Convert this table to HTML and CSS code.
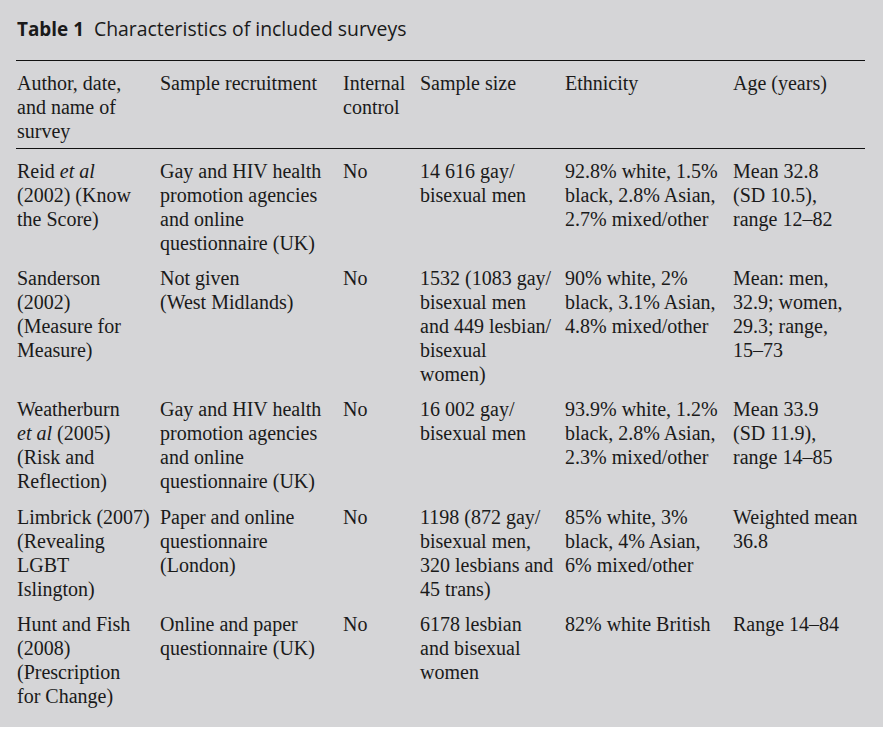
FILE: index.html
```html
<!DOCTYPE html>
<html lang="en">
<head>
<meta charset="utf-8">
<title>Table 1 Characteristics of included surveys</title>
<link rel="stylesheet" href="styles.css">
</head>
<body>
<div class="panel">
  <h1 class="caption"><span class="label">Table 1</span><span class="caption-text">Characteristics of included surveys</span></h1>
  <table class="tbl">
    <colgroup>
      <col class="c1"><col class="c2"><col class="c3"><col class="c4"><col class="c5"><col class="c6">
    </colgroup>
    <thead>
      <tr>
        <th>Author, date,<br>and name of<br>survey</th>
        <th>Sample recruitment</th>
        <th>Internal<br>control</th>
        <th>Sample size</th>
        <th>Ethnicity</th>
        <th>Age (years)</th>
      </tr>
    </thead>
    <tbody>
      <tr>
        <td>Reid <i>et al</i><br>(2002) (Know<br>the Score)</td>
        <td>Gay and HIV health<br>promotion agencies<br>and online<br>questionnaire (UK)</td>
        <td>No</td>
        <td>14 616 gay/<br>bisexual men</td>
        <td>92.8% white, 1.5%<br>black, 2.8% Asian,<br>2.7% mixed/other</td>
        <td>Mean 32.8<br>(SD 10.5),<br>range 12–82</td>
      </tr>
      <tr>
        <td>Sanderson<br>(2002)<br>(Measure for<br>Measure)</td>
        <td>Not given<br>(West Midlands)</td>
        <td>No</td>
        <td>1532 (1083 gay/<br>bisexual men<br>and 449 lesbian/<br>bisexual<br>women)</td>
        <td>90% white, 2%<br>black, 3.1% Asian,<br>4.8% mixed/other</td>
        <td>Mean: men,<br>32.9; women,<br>29.3; range,<br>15–73</td>
      </tr>
      <tr>
        <td>Weatherburn<br><i>et al</i> (2005)<br>(Risk and<br>Reflection)</td>
        <td>Gay and HIV health<br>promotion agencies<br>and online<br>questionnaire (UK)</td>
        <td>No</td>
        <td>16 002 gay/<br>bisexual men</td>
        <td>93.9% white, 1.2%<br>black, 2.8% Asian,<br>2.3% mixed/other</td>
        <td>Mean 33.9<br>(SD 11.9),<br>range 14–85</td>
      </tr>
      <tr class="row-wide">
        <td>Limbrick (2007)<br>(Revealing<br>LGBT<br>Islington)</td>
        <td>Paper and online<br>questionnaire<br>(London)</td>
        <td>No</td>
        <td>1198 (872 gay/<br>bisexual men,<br>320 lesbians and<br>45 trans)</td>
        <td>85% white, 3%<br>black, 4% Asian,<br>6% mixed/other</td>
        <td>Weighted mean<br>36.8</td>
      </tr>
      <tr>
        <td>Hunt and Fish<br>(2008)<br>(Prescription<br>for Change)</td>
        <td>Online and paper<br>questionnaire (UK)</td>
        <td>No</td>
        <td>6178 lesbian<br>and bisexual<br>women</td>
        <td>82% white British</td>
        <td>Range 14–84</td>
      </tr>
    </tbody>
  </table>
</div>
</body>
</html>
```
FILE: styles.css
```css
html {
  background: #ffffff;
}
body {
  margin: 0;
}
.panel {
  background: #d5d5d7;
  height: 727px;
  box-sizing: border-box;
  padding: 17px 18px 0 16px;
  color: #1a1a1a;
}
.caption {
  margin: 0 0 0 1px;
  font-family: "Open Sans", "Noto Sans", sans-serif;
  font-size: 19.4px;
  line-height: 24px;
  font-weight: 400;
  height: 24px;
}
.label {
  font-weight: 700;
  font-size: 18.9px;
  margin-right: 10px;
}
.tbl {
  margin-top: 19px;
  width: 849px;
  border-collapse: collapse;
  table-layout: fixed;
  font-family: "Liberation Serif", "Times New Roman", serif;
  font-size: 20px;
  line-height: 24px;
  border-top: 1px solid #111;
}
.c1 { width: 143px; }
.c2 { width: 183px; }
.c3 { width: 77px; }
.c4 { width: 145px; }
.c5 { width: 168px; }
.c6 { width: 133px; }
.tbl th,
.tbl td {
  text-align: left;
  vertical-align: top;
  font-weight: 400;
  white-space: nowrap;
  padding: 10px 0 1px 1px;
}
.tbl th {
  padding-bottom: 5px;
}
.tbl thead tr {
  border-bottom: 1px solid #111;
}
.tbl .row-wide td {
  padding-top: 11px;
}
```
